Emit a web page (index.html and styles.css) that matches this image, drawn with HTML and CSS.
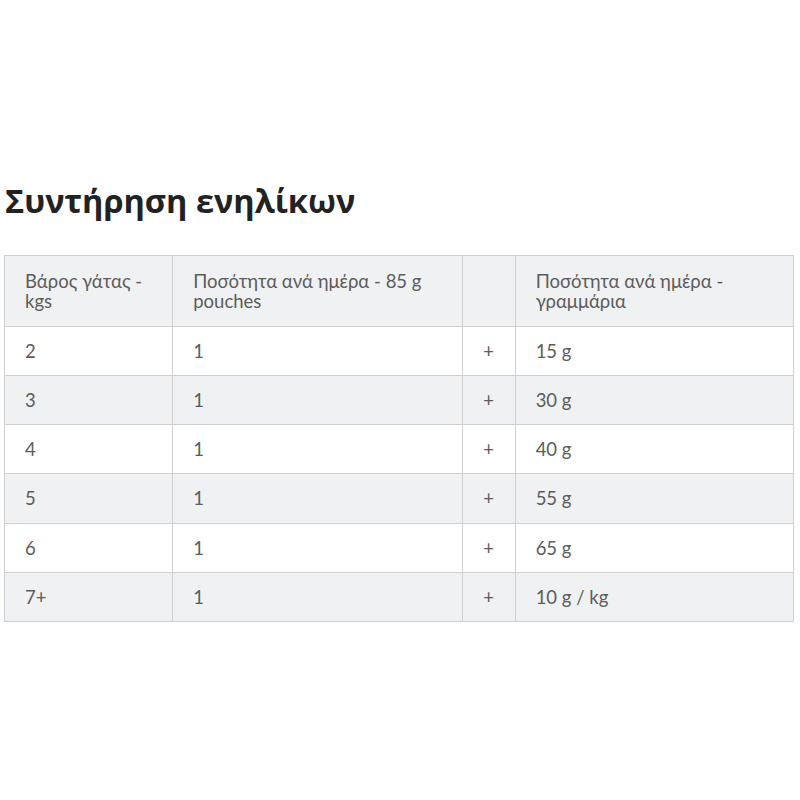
FILE: index.html
```html
<!DOCTYPE html>
<html lang="el">
<head>
<meta charset="utf-8">
<link rel="stylesheet" href="styles.css">
</head>
<body>
<div class="page">
  <h2 class="title">Συντήρηση ενηλίκων</h2>
  <table class="feed">
    <colgroup>
      <col class="c1"><col class="c2"><col class="c3"><col class="c4">
    </colgroup>
    <thead>
      <tr><th>Βάρος γάτας - kgs</th><th>Ποσότητα ανά ημέρα - 85 g pouches</th><th></th><th>Ποσότητα ανά ημέρα - γραμμάρια</th></tr>
    </thead>
    <tbody>
      <tr><td>2</td><td>1</td><td class="plus">+</td><td>15 g</td></tr>
      <tr><td>3</td><td>1</td><td class="plus">+</td><td>30 g</td></tr>
      <tr><td>4</td><td>1</td><td class="plus">+</td><td>40 g</td></tr>
      <tr><td>5</td><td>1</td><td class="plus">+</td><td>55 g</td></tr>
      <tr><td>6</td><td>1</td><td class="plus">+</td><td>65 g</td></tr>
      <tr><td>7+</td><td>1</td><td class="plus">+</td><td>10 g / kg</td></tr>
    </tbody>
  </table>
</div>
</body>
</html>
```
FILE: styles.css
```css
html, body {
  margin: 0;
  padding: 0;
  background: #fff;
}
.page {
  padding: 179px 6px 0 4px;
}
.title {
  margin: 0 0 32px 1px;
  font-family: "Open Sans", "DejaVu Sans", sans-serif;
  font-weight: 700;
  font-size: 32.5px;
  line-height: 44px;
  color: #222;
}
.feed {
  width: 790px;
  border-collapse: collapse;
  table-layout: fixed;
  font-family: Lato, "Liberation Sans", sans-serif;
  font-size: 18.5px;
  line-height: 20px;
  color: #5c5c5c;
  border: 1px solid #cfcfcf;
}
.c1 { width: 168px; }
.c2 { width: 289px; }
.c3 { width: 53px; }
.c4 { width: 278px; }
.feed th, .feed td {
  border: 1px solid #cfcfcf;
  padding: 14px 20px 14.15px;
  text-align: left;
  font-weight: 400;
  vertical-align: middle;
}
.feed th {
  padding: 15px 20px 15px;
}
.feed thead tr {
  background: #f0f1f2;
}
.feed tbody tr:nth-child(even) {
  background: #f0f1f2;
}
.feed tbody tr:nth-child(odd) {
  background: #fff;
}
.feed td.plus {
  text-align: center;
  padding-left: 0;
  padding-right: 0;
}
```
